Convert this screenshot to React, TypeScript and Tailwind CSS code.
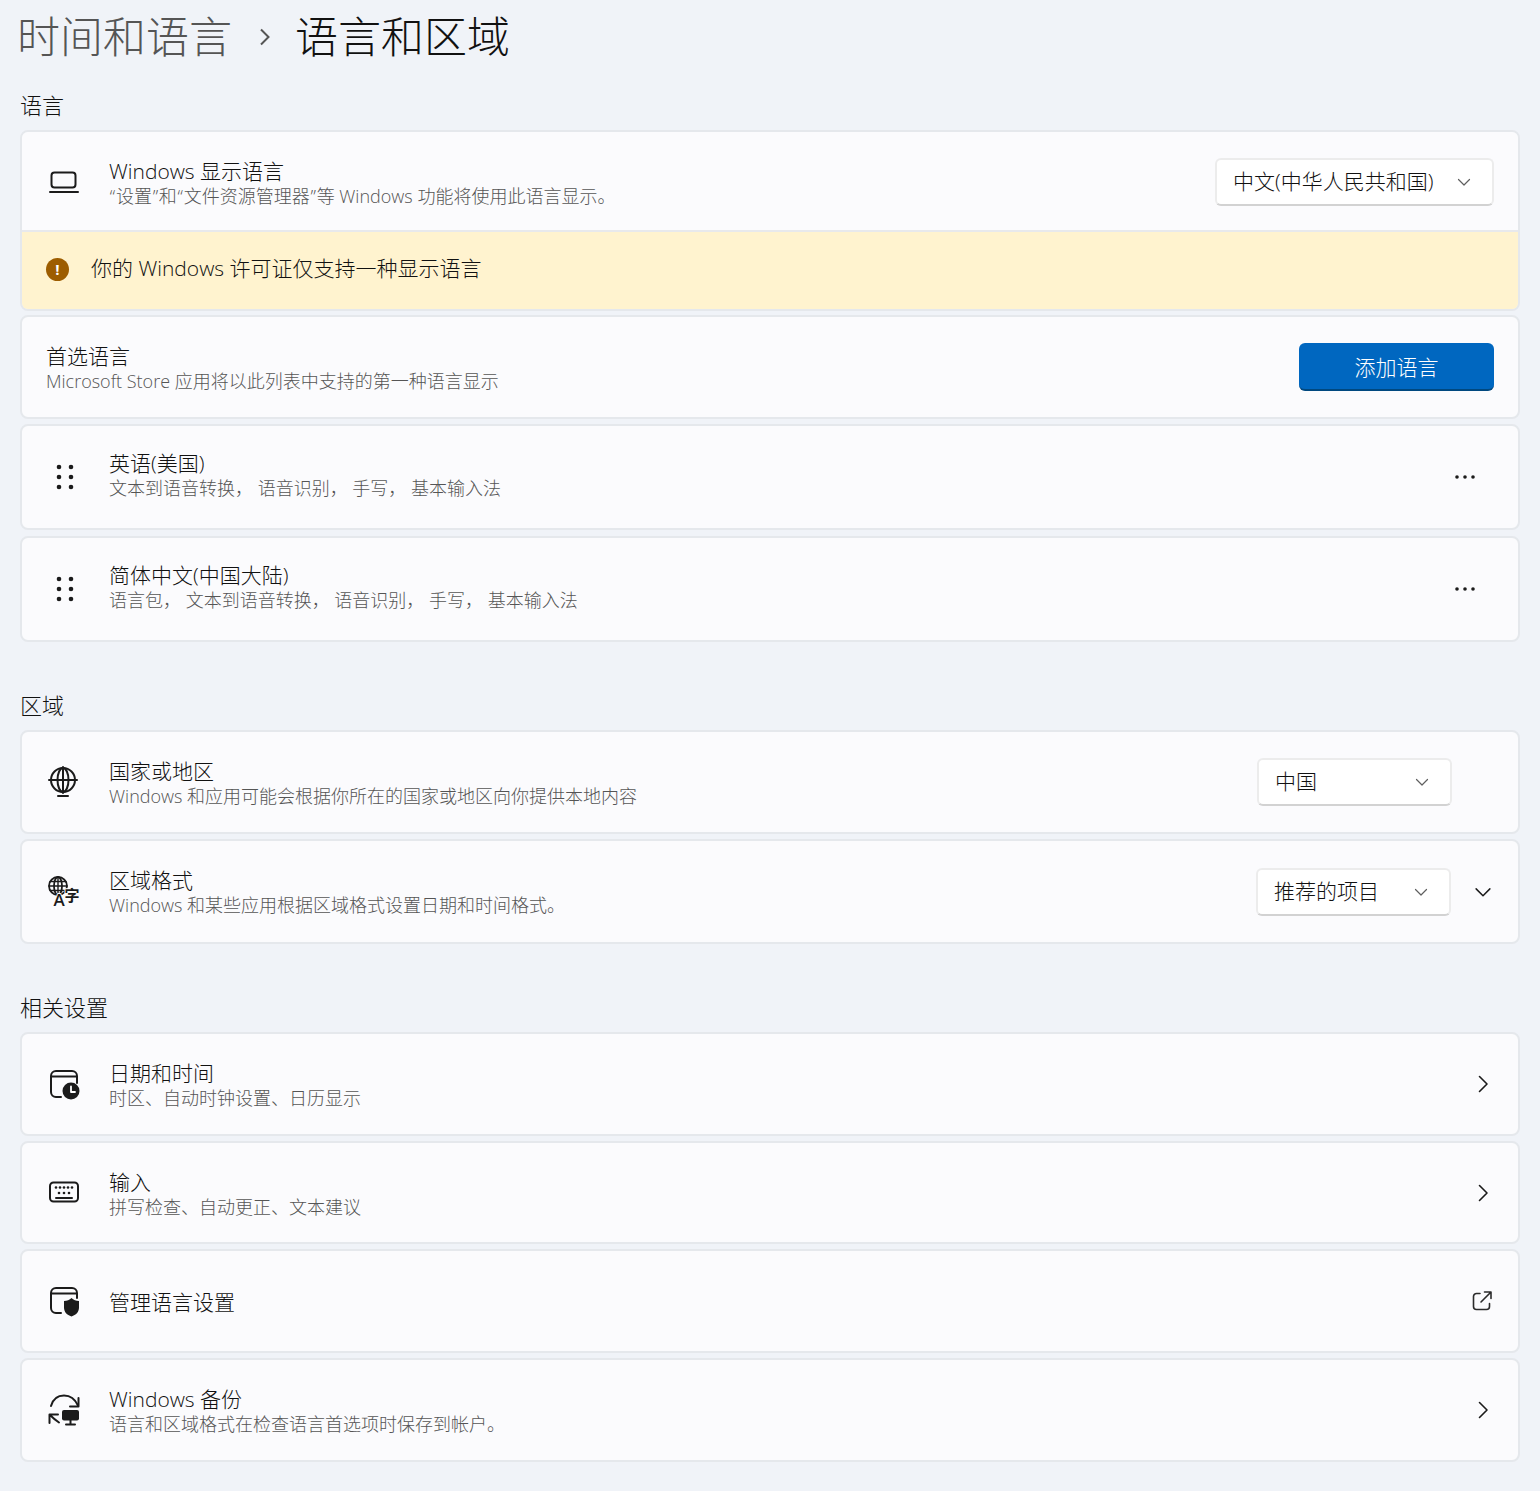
import type { ReactNode } from 'react';

const fontStack = { fontFamily: '"Open Sans", "Noto Sans CJK SC", sans-serif' };

function Chevron({ className }: { className?: string }) {
  return (
    <svg viewBox="0 0 16 16" className={className} fill="none" stroke="currentColor" strokeWidth="1.2" strokeLinecap="round" strokeLinejoin="round">
      <path d="M2.5 5.5 8 11l5.5-5.5" />
    </svg>
  );
}

function ChevronRight() {
  return (
    <svg viewBox="0 0 12 20" className="w-3 h-5 text-[#1b1b1b]" fill="none" stroke="currentColor" strokeWidth="1.6" strokeLinecap="round" strokeLinejoin="round">
      <path d="M2.5 2.5 10 10l-7.500 7.500" />
    </svg>
  );
}

function Dropdown({ label, width }: { label: string; width: string }) {
  return (
    <div className={`flex items-center justify-between h-[48px] pl-[16px] pr-[20px] bg-white rounded-[6px] border-2 border-[#ececec] border-b-[#d2d2d2] text-[21px] font-light text-[#111] ${width}`}>
      <span>{label}</span>
      <Chevron className="w-[16px] h-[16px] text-[#5f5f5f]" />
    </div>
  );
}

function Row({ icon, title, sub, right, height = 'h-[104px]', textClass = '' }: { icon?: ReactNode; title: string; sub?: string; right?: ReactNode; height?: string; textClass?: string }) {
  return (
    <div className={`flex items-center bg-[#fbfbfd] border-2 border-[#e5e8ec] rounded-[8px] ${height}`}>
      <div className="flex items-center justify-center w-[34px] ml-[25px] mr-[28px] shrink-0">{icon}</div>
      <div className={`flex-1 min-w-0 ${textClass}`}>
        <div className="text-[21px] leading-[25px] font-light text-[#111]">{title}</div>
        {sub && <div className="text-[18px] leading-[25px] font-light text-[#555]">{sub}</div>}
      </div>
      {right}
    </div>
  );
}

function SectionTitle({ children, className }: { children: ReactNode; className?: string }) {
  return <h2 className={`text-[22px] leading-[30px] font-light text-[#111] ${className ?? ''}`}>{children}</h2>;
}

function Dots() {
  return (
    <svg viewBox="0 0 18 26" className="w-[18px] h-[26px] ml-[2px] text-[#1b1b1b]" fill="currentColor">
      <circle cx="3" cy="3" r="2.3" /><circle cx="15" cy="3" r="2.3" />
      <circle cx="3" cy="13" r="2.3" /><circle cx="15" cy="13" r="2.3" />
      <circle cx="3" cy="23" r="2.3" /><circle cx="15" cy="23" r="2.3" />
    </svg>
  );
}

function More() {
  return (
    <svg viewBox="0 0 20 4" className="w-[20px] h-[4px] mr-[43px] text-[#1b1b1b]" fill="currentColor">
      <circle cx="2" cy="2" r="1.8" /><circle cx="10" cy="2" r="1.8" /><circle cx="18" cy="2" r="1.8" />
    </svg>
  );
}

const iconProps = { viewBox: '0 0 32 32', className: 'w-[32px] h-[32px] text-[#1b1b1b]', fill: 'none', stroke: 'currentColor', strokeWidth: 2, strokeLinecap: 'round' as const, strokeLinejoin: 'round' as const };

function LaptopIcon() {
  return (
    <svg {...iconProps}>
      <rect x="3.500" y="7.500" width="24" height="15" rx="3" />
      <path d="M2 27h28" />
    </svg>
  );
}

function GlobeIcon() {
  return (
    <svg {...iconProps}>
      <circle cx="15" cy="14" r="12" />
      <ellipse cx="15" cy="14" rx="5.500" ry="12" />
      <path d="M1 14h28M15 1v26M10 30h10" />
    </svg>
  );
}

function LocaleIcon() {
  return (
    <svg {...iconProps} className="w-[32px] h-[32px] text-[#1b1b1b] overflow-visible" strokeWidth={1.8}>
      <circle cx="10" cy="10" r="9" />
      <ellipse cx="10" cy="10" rx="4" ry="9" />
      <path d="M1 10h18M10 1v18M2 5.500h16M2 14.500h16" strokeWidth={1.4} />
      <g stroke="#fbfbfd" strokeWidth={2} fill="#1b1b1b" style={{ paintOrder: 'stroke' }}>
        <text x="5.500" y="30" fontSize="17" fontWeight="600" fontFamily='"Open Sans", sans-serif'>A</text>
        <text x="16.500" y="25" fontSize="15" fontWeight="700" fontFamily='"Noto Sans CJK SC", sans-serif'>字</text>
      </g>
    </svg>
  );
}

function CalendarClockIcon() {
  return (
    <svg {...iconProps}>
      <path d="M13 29H8a5 5 0 0 1-5-5V8a5 5 0 0 1 5-5h16a5 5 0 0 1 5 5v7M3 8.500h26" />
      <circle cx="23" cy="23" r="8.500" fill="currentColor" stroke="none" />
      <path d="M23 18.500V24h4" stroke="#fff" strokeWidth="1.800" />
    </svg>
  );
}

function KeyboardIcon() {
  return (
    <svg {...iconProps}>
      <rect x="2" y="5.500" width="28" height="19" rx="3.500" />
      <path d="M8 21h16" />
      <g fill="currentColor" stroke="none">
        <circle cx="8" cy="10.500" r="1.300" /><circle cx="12" cy="10.500" r="1.300" /><circle cx="16" cy="10.500" r="1.300" /><circle cx="20" cy="10.500" r="1.300" /><circle cx="24" cy="10.500" r="1.300" />
        <circle cx="11" cy="16" r="1.300" /><circle cx="16" cy="16" r="1.300" /><circle cx="21" cy="16" r="1.300" />
      </g>
    </svg>
  );
}

function ShieldIcon() {
  return (
    <svg {...iconProps}>
      <path d="M13 28H8a5 5 0 0 1-5-5V8a5 5 0 0 1 5-5h16a5 5 0 0 1 5 5v5M3 8.500h26" />
      <path d="M23.500 13c2 2 4.500 3 7.500 3v6.500c0 4.500-3 7.500-7.500 9-4.500-1.500-7.500-4.500-7.500-9V16c3 0 5.500-1 7.500-3Z" fill="currentColor" stroke="none" />
    </svg>
  );
}

function BackupIcon() {
  return (
    <svg {...iconProps}>
      <path d="M3 12C5 5 10 1.500 16 1.500c5.500 0 11 3.500 14 10" />
      <path d="M30.500 4v8.500H22" />
      <path d="M1.500 29v-8.500H10M2 21c3 3 6 5.500 9 7.500" />
      <rect x="14" y="16" width="17" height="10.500" rx="2" fill="currentColor" stroke="none" />
      <path d="M22.500 26v4M18 30.500h9" />
    </svg>
  );
}

function ExternalIcon() {
  return (
    <svg viewBox="0 0 20 20" className="w-[20px] h-[20px] text-[#2b2b2b]" fill="none" stroke="currentColor" strokeWidth="1.600" strokeLinecap="round" strokeLinejoin="round">
      <path d="M8 2.500H4.500a3 3 0 0 0-3 3V15.500a3 3 0 0 0 3 3h10a3 3 0 0 0 3-3V12.500" />
      <path d="M9 11 18.500 1.500M12.500 1h6.500v6.500" />
    </svg>
  );
}

function Quote({ children }: { children: string }) {
  return <span className="mx-[0.75px]">{children}</span>;
}

export default function App() {
  return (
    <div className="min-h-[1491px] w-[1540px] bg-[#f0f3f8] px-[20px] overflow-hidden" style={fontStack}>
      <div className="flex items-center h-[74px] -ml-[3px]">
        <span className="text-[43px] font-light text-[#555]">时间和语言</span>
        <svg viewBox="0 0 12 20" className="w-[12px] h-[20px] ml-[27px] mr-[24px] text-[#555]" fill="none" stroke="currentColor" strokeWidth="2"><path d="M2 2.500 9.500 10 2 17.500" /></svg>
        <span className="text-[43px] font-light text-[#111]">语言和区域</span>
      </div>

      <SectionTitle className="mt-[16px]">语言</SectionTitle>
      <div className="mt-[10px] rounded-[8px] border-2 border-[#e5e8ec] overflow-hidden">
        <div className="flex items-center h-[100px] bg-[#fbfbfd] border-b-2 border-[#e8e9ec]">
          <div className="flex items-center justify-center w-[34px] ml-[25px] mr-[28px]"><LaptopIcon /></div>
          <div className="flex-1 pt-[6px]">
            <div className="text-[21px] leading-[25px] font-light text-[#111]">Windows 显示语言</div>
            <div className="text-[18px] leading-[25px] font-light text-[#555]">
              <Quote>“</Quote>设置<Quote>”</Quote>和<Quote>“</Quote>文件资源管理器<Quote>”</Quote>等 Windows 功能将使用此语言显示。
            </div>
          </div>
          <Dropdown label="中文(中华人民共和国)" width="w-[279px] mr-[24px] mt-[2px]" />
        </div>
        <div className="flex items-center h-[77px] bg-[#fff3cf] pl-[24px] pb-[3px]">
          <span className="flex items-center justify-center w-[23px] h-[23px] rounded-full bg-[#9d5d00] text-white text-[15px] font-bold">!</span>
          <span className="ml-[22px] text-[21px] font-light text-[#111]">你的 Windows 许可证仅支持一种显示语言</span>
        </div>
      </div>

      <div className="mt-[4px] flex items-center h-[104px] bg-[#fbfbfd] border-2 border-[#e5e8ec] rounded-[8px] pl-[24px] pr-[24px]">
        <div className="flex-1 pt-[3px]">
          <div className="text-[21px] leading-[25px] font-light text-[#111]">首选语言</div>
          <div className="text-[18px] leading-[25px] font-light text-[#555]">Microsoft Store 应用将以此列表中支持的第一种语言显示</div>
        </div>
        <button className="w-[195px] h-[48px] pt-[3px] rounded-[6px] bg-[#0067c0] border-b-2 border-[#00487f] text-white text-[21px] font-light">添加语言</button>
      </div>

      <div className="mt-[5px] flex flex-col gap-[6px]">
        <Row icon={<Dots />} height="h-[106px]" textClass="pb-[2px]" title="英语(美国)" sub="文本到语音转换， 语音识别， 手写， 基本输入法" right={<More />} />
        <Row icon={<Dots />} height="h-[106px]" textClass="pb-[3px]" title="简体中文(中国大陆)" sub="语言包， 文本到语音转换， 语音识别， 手写， 基本输入法" right={<More />} />
      </div>

      <SectionTitle className="mt-[48px]">区域</SectionTitle>
      <div className="mt-[10px] flex flex-col gap-[5px]">
        <Row icon={<GlobeIcon />} textClass="pt-[3px]" title="国家或地区" sub="Windows 和应用可能会根据你所在的国家或地区向你提供本地内容" right={<Dropdown label="中国" width="w-[195px] mr-[66px]" />} />
        <Row
          icon={<LocaleIcon />}
          height="h-[105px]"
          textClass="pt-[2px]"
          title="区域格式"
          sub="Windows 和某些应用根据区域格式设置日期和时间格式。"
          right={
            <div className="flex items-center">
              <Dropdown label="推荐的项目" width="w-[195px] mr-[22px]" />
              <Chevron className="w-[20px] h-[20px] mr-[25px] text-[#1b1b1b]" />
            </div>
          }
        />
      </div>

      <SectionTitle className="mt-[48px]">相关设置</SectionTitle>
      <div className="mt-[10px] flex flex-col gap-[5px]">
        <Row icon={<CalendarClockIcon />} textClass="pt-[3px]" title="日期和时间" sub="时区、自动时钟设置、日历显示" right={<div className="mr-[29px]"><ChevronRight /></div>} />
        <Row icon={<KeyboardIcon />} height="h-[103px]" textClass="pt-[4px]" title="输入" sub="拼写检查、自动更正、文本建议" right={<div className="mr-[29px]"><ChevronRight /></div>} />
        <Row icon={<ShieldIcon />} textClass="pt-[2px]" title="管理语言设置" right={<div className="mr-[26px]"><ExternalIcon /></div>} />
        <Row icon={<BackupIcon />} textClass="pt-[4px]" title="Windows 备份" sub="语言和区域格式在检查语言首选项时保存到帐户。" right={<div className="mr-[29px]"><ChevronRight /></div>} />
      </div>
    </div>
  );
}
